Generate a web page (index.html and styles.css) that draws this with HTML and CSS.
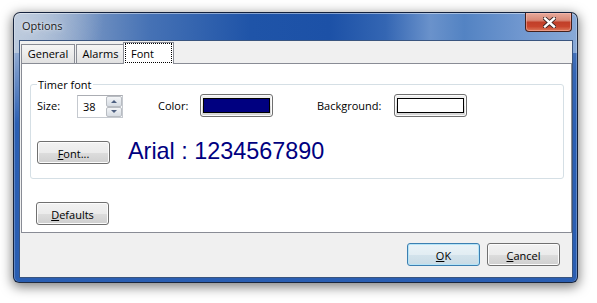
FILE: index.html
```html
<!DOCTYPE html>
<html>
<head>
<meta charset="utf-8">
<title>Options</title>
<link rel="stylesheet" href="styles.css">
</head>
<body>
<div class="desktop">
  <div class="window">
    <div class="titlebar">
      <span class="title">Options</span>
      <div class="close">
        <svg width="13" height="11" viewBox="0 0 13 11">
          <path d="M2 1.5 L11 9.5 M11 1.5 L2 9.5" stroke="#3a2422" stroke-width="4.2" stroke-linecap="square" fill="none"/>
          <path d="M2 1.5 L11 9.5 M11 1.5 L2 9.5" stroke="#ffffff" stroke-width="2.4" stroke-linecap="square" fill="none"/>
        </svg>
      </div>
    </div>
    <div class="client">
      <div class="tabs">
        <div class="tabstrip">
          <div class="tab tab-general">General</div>
          <div class="tab tab-alarms">Alarms</div>
          <div class="tab tab-active"><span class="focus">Font</span></div>
        </div>
        <div class="panel">
          <fieldset class="group">
            <legend>Timer font</legend>
            <div class="row">
              <span class="lbl lbl-size">Size:</span>
              <div class="spin">
                <span class="spin-val">38</span>
                <div class="spin-btns">
                  <div class="spin-btn"><span class="arrow-up"></span></div>
                  <div class="spin-btn"><span class="arrow-down"></span></div>
                </div>
              </div>
              <span class="lbl lbl-color">Color:</span>
              <div class="colorbtn"><div class="swatch swatch-navy"></div></div>
              <span class="lbl lbl-bg">Background:</span>
              <div class="colorbtn"><div class="swatch swatch-white"></div></div>
            </div>
            <div class="row row-font">
              <button class="btn"><u>F</u>ont...</button>
              <span class="preview">Arial : 1234567890</span>
            </div>
          </fieldset>
          <button class="btn btn-defaults"><u>D</u>efaults</button>
        </div>
      </div>
      <div class="footer">
        <button class="btn btn-default"><u>O</u>K</button>
        <button class="btn"><u>C</u>ancel</button>
      </div>
    </div>
  </div>
</div>
</body>
</html>
```
FILE: styles.css
```css
* { box-sizing: border-box; }
html, body { margin: 0; padding: 0; background: #ffffff; }
body {
  font-family: "Open Sans", "Noto Sans", sans-serif;
  font-size: 11px;
  line-height: 15px;
  color: #000000;
}
.desktop {
  width: 597px;
  height: 303px;
  padding: 12px 0 0 13px;
  overflow: hidden;
}
.window {
  width: 565px;
  height: 271px;
  border: 1px solid rgba(18, 28, 48, 0.9);
  border-radius: 7px 7px 6px 6px;
  padding: 0 4px 4px 5px;
  display: flex;
  flex-direction: column;
  background:
    radial-gradient(ellipse 90px 110px at 0 0, rgba(196, 208, 224, 0.95), rgba(196, 208, 224, 0) 100%),
    linear-gradient(90deg, #a7bad3 0%, #8aa3c8 8%, #4672b5 24%, #1f54a8 42%, #1c51a7 56%, #3466b3 66%, #6a92cb 74%, #5383c3 80%, #7097cf 90%, #88a9d7 100%) 0 0 / 100% 40px no-repeat,
    linear-gradient(180deg, #5b82bf 0, #3566b5 60px, #2b5fb3 120px, #2a5eb2 100%);
  box-shadow: 0 3px 12px 1px rgba(0, 0, 0, 0.5), inset 0 1px 0 rgba(255, 255, 255, 0.45), inset 1px 0 0 rgba(255, 255, 255, 0.25), inset -1px 0 0 rgba(255, 255, 255, 0.25);
}
.titlebar {
  height: 27px;
  flex: none;
  display: flex;
  justify-content: space-between;
  align-items: flex-start;
  padding-left: 3px;
}
.title {
  margin-top: 5px;
  color: #1a1a1a;
  text-shadow: 0 0 6px rgba(255, 255, 255, 0.7), 0 0 2px rgba(255, 255, 255, 0.6);
}
.close {
  width: 47px;
  height: 19px;
  margin-right: 1px;
  border: 1px solid #44201c;
  border-top: none;
  border-radius: 0 0 4px 4px;
  background: linear-gradient(180deg, #e8aa9c 0%, #d98a78 40%, #c13f29 52%, #c8452d 75%, #dc7a5c 100%);
  box-shadow: inset 0 0 0 1px rgba(255, 200, 190, 0.45);
  display: flex;
  align-items: center;
  justify-content: center;
}
.close svg { display: block; margin-left: 1px; }
.client {
  flex: 1;
  border: 1px solid #3a557f;
  background: #f0f0f0;
  display: flex;
  flex-direction: column;
}
.tabs {
  margin: 1px 0 0 1px;
  flex: none;
}
.tabstrip {
  height: 21px;
  display: flex;
  align-items: flex-end;
}
.tab {
  height: 19px;
  border: 1px solid #898c95;
  border-bottom: none;
  background: linear-gradient(180deg, #f5f5f5 0%, #ececec 50%, #e1e1e1 100%);
  display: flex;
  align-items: center;
  justify-content: center;
  padding-bottom: 1px;
}
.tab-general { width: 54px; }
.tab-alarms { width: 49px; margin-left: 1px; }
.tab-active {
  width: 51px;
  height: 22px;
  margin-left: -2px;
  margin-bottom: -1px;
  background: #ffffff;
  z-index: 2;
  padding: 0 0 1px 1px;
  align-items: stretch;
  justify-content: stretch;
}
.focus {
  flex: 1;
  border: 1px dotted #000000;
  padding: 2px 0 0 5px;
  margin-right: 1px;
}
.panel {
  border: 1px solid #898c95;
  background: #ffffff;
  padding: 0 7px 7px 8px;
}
.group {
  margin: 13px 0 0 0;
  border: 1px solid #d5dfe5;
  border-radius: 3px;
  padding: 0 6px 14px 6px;
  min-width: 0;
}
.group legend {
  padding: 0 1px;
  line-height: 15px;
}
.row {
  height: 23px;
  margin-top: 2px;
  display: flex;
  align-items: center;
}
.row-font { margin-top: 24px; }
.lbl { flex: none; }
.lbl-size { width: 40px; }
.lbl-color { width: 42px; margin-left: 35px; }
.lbl-bg { width: 77px; margin-left: 44px; }
.spin {
  width: 46px;
  height: 23px;
  align-self: flex-start;
  margin-top: 1px;
  border: 1px solid #c5c9cf;
  border-top-color: #abadb3;
  background: #ffffff;
  display: flex;
}
.spin-val {
  flex: 1;
  padding: 3px 0 0 5px;
}
.spin-btns {
  width: 16px;
  display: flex;
  flex-direction: column;
  gap: 0;
  padding: 0 0 0 0;
}
.spin-btn {
  flex: 1;
  border: 1px solid #b8bcc2;
  border-radius: 2px;
  background: linear-gradient(180deg, #f4f5f7 0%, #e4e8ed 50%, #d7dce3 100%);
  display: flex;
  align-items: center;
  justify-content: center;
}
.arrow-up, .arrow-down {
  width: 0;
  height: 0;
  border-left: 3px solid transparent;
  border-right: 3px solid transparent;
}
.arrow-up { border-bottom: 3px solid #4d5f80; }
.arrow-down { border-top: 3px solid #4d5f80; }
.colorbtn {
  width: 73px;
  height: 23px;
  flex: none;
  border: 1px solid #707070;
  border-radius: 3px;
  background: linear-gradient(180deg, #f0f0f0 0%, #e8e8e8 50%, #dcdcdc 51%, #d4d4d4 100%);
  box-shadow: inset 0 0 0 1px #fbfbfb;
  display: flex;
  align-items: center;
  justify-content: center;
}
.swatch {
  width: 67px;
  height: 15px;
  border: 1px solid #000000;
}
.swatch-navy { background: #000080; }
.swatch-white { background: #ffffff; }
.btn {
  width: 73px;
  height: 23px;
  flex: none;
  padding: 1px 0 0 0;
  margin: 0;
  font: inherit;
  color: #000000;
  border: 1px solid #707070;
  border-radius: 3px;
  background: linear-gradient(180deg, #f2f2f2 0%, #ebebeb 50%, #dddddd 51%, #cfcfcf 100%);
  box-shadow: inset 0 0 0 1px #fcfcfc;
  display: flex;
  align-items: center;
  justify-content: center;
}
.btn u { text-decoration: underline; text-underline-offset: 1px; }
.preview {
  margin-left: 18px;
  margin-top: -2px;
  font-family: "Liberation Sans", Arial, sans-serif;
  font-size: 23.4px;
  line-height: 23px;
  color: #000080;
}
.btn-defaults { margin: 23px 0 0 6px; }
.footer {
  flex: 1;
  display: flex;
  justify-content: flex-end;
  align-items: flex-start;
  gap: 7px;
  padding: 10px 12px 0 0;
}
.btn-default {
  border-color: #3c7fb1;
  background: linear-gradient(180deg, #eaf3f8 0%, #e2edf3 50%, #d3e3ec 51%, #c9dbe5 100%);
  box-shadow: inset 0 0 0 1px #b5e4f7;
}
```
